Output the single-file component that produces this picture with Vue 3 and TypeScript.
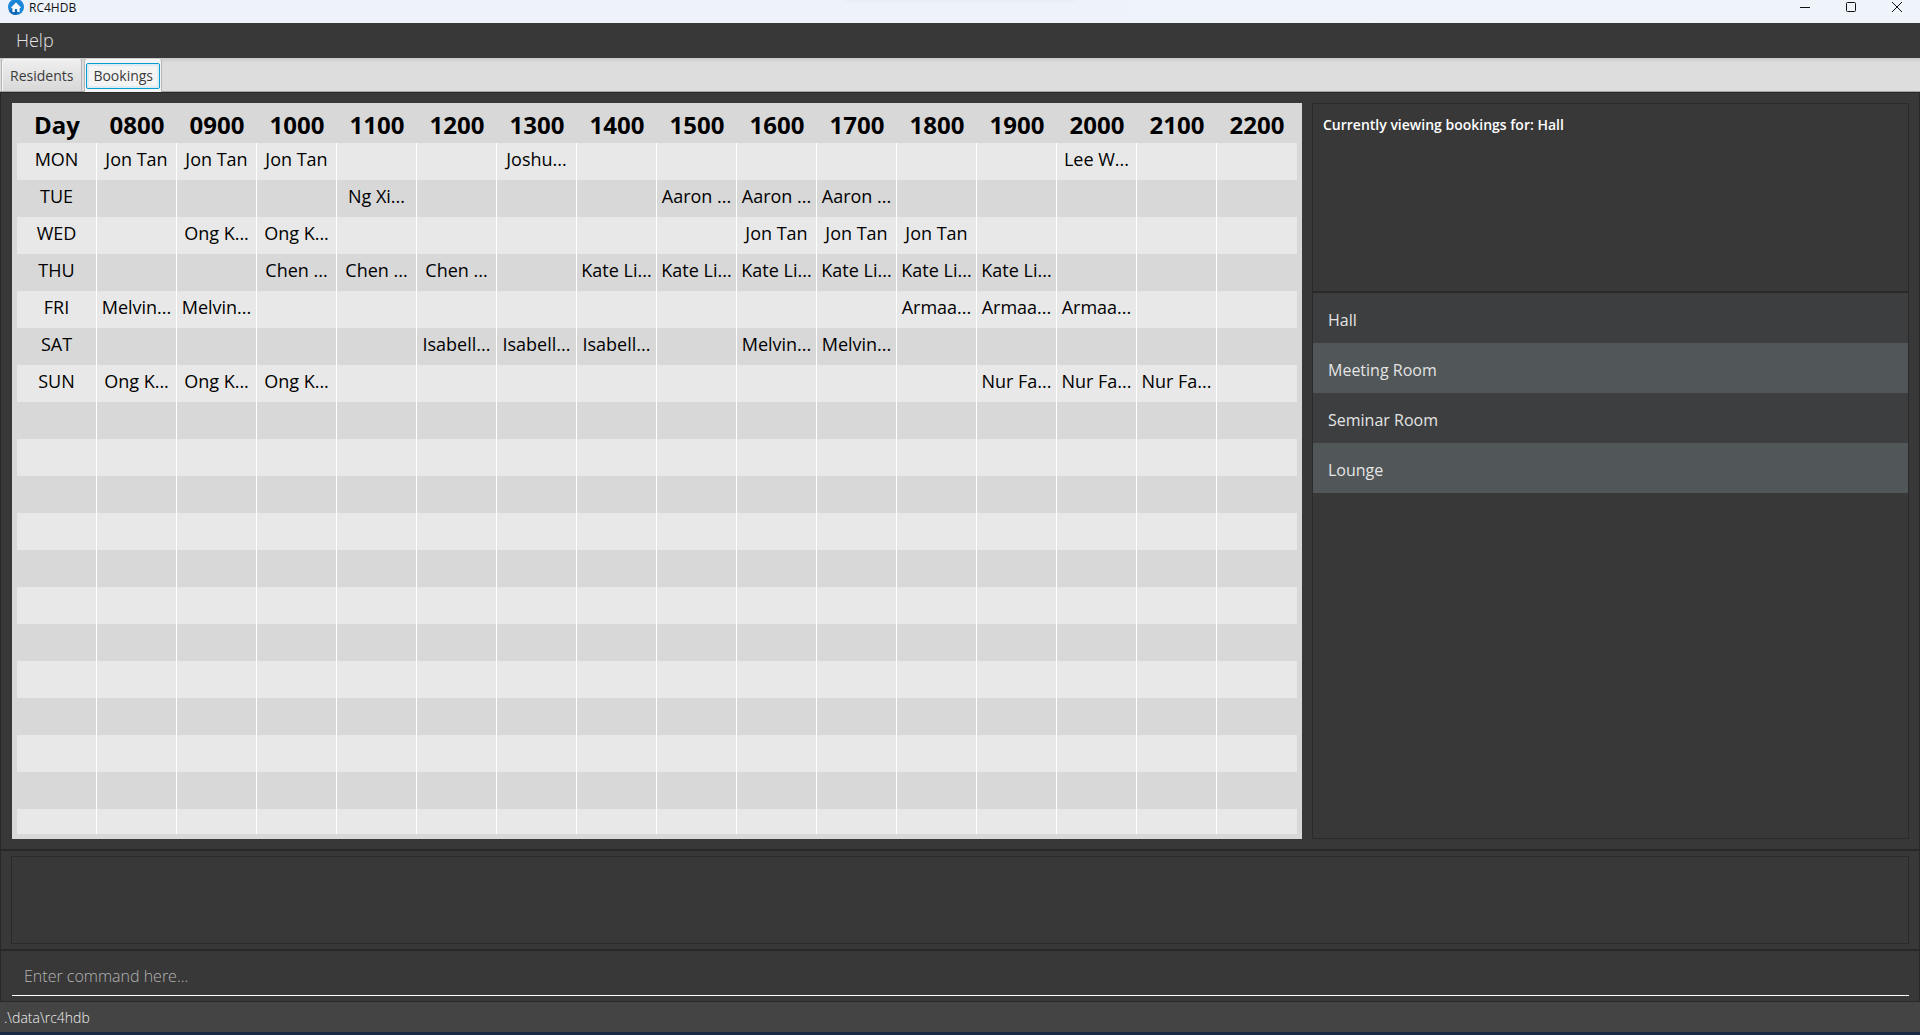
<script setup lang="ts">
import { ref } from 'vue'

interface DayRow {
  day: string
  bookings: Record<string, string>
}

const hours: string[] = Array.from({ length: 15 }, (_, i) => `${String(i + 8).padStart(2, '0')}00`)

const week: DayRow[] = [
  {
    day: 'MON',
    bookings: { '0800': 'Jon Tan', '0900': 'Jon Tan', '1000': 'Jon Tan', '1300': 'Joshu...', '2000': 'Lee W...' },
  },
  {
    day: 'TUE',
    bookings: { '1100': 'Ng Xi...', '1500': 'Aaron ...', '1600': 'Aaron ...', '1700': 'Aaron ...' },
  },
  {
    day: 'WED',
    bookings: { '0900': 'Ong K...', '1000': 'Ong K...', '1600': 'Jon Tan', '1700': 'Jon Tan', '1800': 'Jon Tan' },
  },
  {
    day: 'THU',
    bookings: {
      '1000': 'Chen ...', '1100': 'Chen ...', '1200': 'Chen ...',
      '1400': 'Kate Li...', '1500': 'Kate Li...', '1600': 'Kate Li...',
      '1700': 'Kate Li...', '1800': 'Kate Li...', '1900': 'Kate Li...',
    },
  },
  {
    day: 'FRI',
    bookings: { '0800': 'Melvin...', '0900': 'Melvin...', '1800': 'Armaa...', '1900': 'Armaa...', '2000': 'Armaa...' },
  },
  {
    day: 'SAT',
    bookings: { '1200': 'Isabell...', '1300': 'Isabell...', '1400': 'Isabell...', '1600': 'Melvin...', '1700': 'Melvin...' },
  },
  {
    day: 'SUN',
    bookings: {
      '0800': 'Ong K...', '0900': 'Ong K...', '1000': 'Ong K...',
      '1900': 'Nur Fa...', '2000': 'Nur Fa...', '2100': 'Nur Fa...',
    },
  },
]

// Empty striped rows that fill the table below the last day.
const fillerRows = 12

const venues = ['Hall', 'Meeting Room', 'Seminar Room', 'Lounge']
const tabs = ['Residents', 'Bookings']
const activeTab = ref('Bookings')
const currentVenue = ref('Hall')
const command = ref('')
const result = ref('')
</script>

<template>
  <div class="window">
    <header class="titlebar">
      <svg class="app-icon" viewBox="0 0 16 16" aria-hidden="true">
        <circle cx="8" cy="7" r="8" fill="#1b86d8" />
        <path d="M8 15 A8 8 0 0 1 1 11 L5 8 L11 12 Z" fill="#1268b4" />
        <path d="M8 2.6 L13 7.4 L12 8.2 L11.6 7.9 V12 H9.2 V9 H6.8 V12 H4.4 V7.9 L4 8.2 L3 7.4 Z" fill="#fff" />
      </svg>
      <span class="title">RC4HDB</span>
      <div class="controls">
        <button type="button" aria-label="Minimize">
          <svg viewBox="0 0 12 12"><path d="M1 6.5H11" /></svg>
        </button>
        <button type="button" aria-label="Maximize">
          <svg viewBox="0 0 12 12"><rect x="1.5" y="1.5" width="9" height="9" rx="1" /></svg>
        </button>
        <button type="button" aria-label="Close">
          <svg viewBox="0 0 12 12"><path d="M1 1L11 11M11 1L1 11" /></svg>
        </button>
      </div>
    </header>

    <nav class="menubar">
      <button type="button">Help</button>
    </nav>

    <div class="tabs" role="tablist">
      <button
        v-for="tab in tabs"
        :key="tab"
        type="button"
        role="tab"
        class="tab"
        :class="{ active: tab === activeTab }"
        :aria-selected="tab === activeTab"
        @click="activeTab = tab"
      >
        <span>{{ tab }}</span>
      </button>
    </div>

    <main class="content">
      <section class="schedule">
        <div class="viewport">
          <table>
            <thead>
              <tr>
                <th scope="col">Day</th>
                <th v-for="hour in hours" :key="hour" scope="col">{{ hour }}</th>
              </tr>
            </thead>
            <tbody>
              <tr v-for="row in week" :key="row.day">
                <td>{{ row.day }}</td>
                <td v-for="hour in hours" :key="hour">{{ row.bookings[hour] }}</td>
              </tr>
              <tr v-for="n in fillerRows" :key="n">
                <td v-for="c in hours.length + 1" :key="c"></td>
              </tr>
            </tbody>
          </table>
        </div>
      </section>

      <aside class="side">
        <p class="viewing">Currently viewing bookings for: {{ currentVenue }}</p>
        <ul class="venues">
          <li v-for="venue in venues" :key="venue">{{ venue }}</li>
        </ul>
      </aside>
    </main>

    <section class="result">
      <textarea v-model="result" readonly aria-label="Command result"></textarea>
    </section>

    <section class="command">
      <input v-model="command" type="text" placeholder="Enter command here..." aria-label="Command" />
    </section>

    <footer class="status">.\data\rc4hdb</footer>
  </div>
</template>

<style>
body {
  background: #383838;
}
</style>

<style scoped>
.window {
  display: flex;
  flex-direction: column;
  height: 100vh;
  box-sizing: border-box;
  border-bottom: 3px solid #1b2a44;
  overflow: hidden;
  background: #383838;
  font-family: "Open Sans", "Noto Sans", sans-serif;
}

button {
  margin: 0;
  padding: 0;
  border: 0;
  background: none;
  font-family: inherit;
}

.titlebar {
  display: flex;
  align-items: flex-start;
  height: 23px;
  padding-left: 8px;
  background: linear-gradient(90deg, #eef3fb 55%, #eef4f9 75%);
  position: relative;
}

.titlebar::before {
  content: "";
  position: absolute;
  top: -3px;
  left: 44%;
  width: 12%;
  height: 2px;
  box-shadow: 0 0 4px #d4d9e6;
}

.app-icon {
  width: 16px;
  height: 16px;
  margin-right: 5px;
}

.title {
  font-size: 12px;
  line-height: 16px;
  color: #111;
}

.controls {
  display: flex;
  margin-left: auto;
}

.controls button {
  width: 46px;
  height: 14px;
  display: flex;
  align-items: center;
  justify-content: center;
}

.controls svg {
  width: 12px;
  height: 12px;
  fill: none;
  stroke: #111;
}

.menubar {
  height: 35px;
  padding-left: 16px;
}

.menubar button {
  font-size: 18px;
  font-weight: 300;
  line-height: 35px;
  color: #e4e4e4;
}

.tabs {
  display: flex;
  align-items: stretch;
  gap: 2px;
  height: 34px;
  box-sizing: border-box;
  padding: 1px 1px 0;
  border-bottom: 1px solid #a4a4a4;
  background: linear-gradient(#cacaca, #dddddd 5px);
}

.tab {
  box-sizing: border-box;
  padding: 3px 1px 2px;
  border: 1px solid #b5b5b5;
  border-width: 0 1px;
  border-radius: 3px 3px 0 0;
  background: linear-gradient(#efefef, #d8d8d8);
  box-shadow: inset 1px 1px #f6f6f6;
  font-size: 14px;
  line-height: 24px;
  color: #3b3b3b;
}

.tab span {
  display: block;
  padding: 0 6px;
  border: 1px solid transparent;
  border-radius: 2px;
}

.tab.active {
  background: #f4f4f4;
  margin-bottom: -1px;
}

.tab.active span {
  border-color: #039ed3;
  box-shadow: inset 0 0 0 2px #dcecf2;
}

.content {
  display: flex;
  gap: 10px;
  flex: 1;
  min-height: 0;
  padding: 10px 10px 10px 11px;
  border: 1px solid #282828;
}

.schedule {
  flex: 1280 1 0;
  min-width: 0;
  box-sizing: border-box;
  padding: 5px;
  background: #d8d8d8;
  display: flex;
}

.viewport {
  flex: 1;
  min-width: 0;
  overflow: hidden;
}

table {
  width: 100%;
  table-layout: fixed;
  border-spacing: 0;
  color: #000;
}

th {
  height: 35px;
  box-sizing: border-box;
  padding: 0 0 2px;
  font-size: 24px;
  line-height: 33px;
  font-weight: 700;
}

td {
  height: 37px;
  box-sizing: border-box;
  padding: 0 0 5px;
  border-right: 1px solid #fff;
  text-align: center;
  font-size: 18px;
  line-height: 32px;
  white-space: nowrap;
}

td:last-child {
  border-right: 0;
}

tbody tr:nth-child(odd) {
  background: #e8e8e8;
}

.side {
  flex: 595 1 0;
  min-width: 0;
  box-sizing: border-box;
  border: 1px solid #2a2a2a;
}

.viewing {
  height: 187px;
  margin: 0;
  box-sizing: border-box;
  padding: 10px;
  font-size: 14px;
  line-height: 22px;
  font-weight: 600;
  color: #fff;
}

.venues {
  margin: 0;
  padding: 0;
  border-top: 2px solid #2a2a2a;
  list-style: none;
}

.venues li {
  height: 50px;
  box-sizing: border-box;
  padding: 2px 15px 0;
  font-size: 16px;
  line-height: 50px;
  font-weight: 500;
  color: #e4e4e4;
  background: #3c3e3f;
}

.venues li:nth-child(even) {
  background: #515658;
}

.result {
  display: flex;
  padding: 5px 10px;
  border: 1px solid #282828;
}

.result textarea {
  flex: 1;
  height: 88px;
  box-sizing: border-box;
  margin: 0;
  padding: 10px;
  border: 1px solid #2a2a2a;
  outline: 0;
  resize: none;
  background: #383838;
  color: #fff;
  font-family: inherit;
  font-size: 14px;
}

.command {
  display: flex;
  padding: 5px 10px 5px 11px;
  border: 1px solid #282828;
}

.command input {
  flex: 1;
  min-width: 0;
  height: 40px;
  box-sizing: border-box;
  margin: 0;
  padding: 0 12px;
  border: 0;
  border-bottom: 1px solid #fff;
  outline: 0;
  background: transparent;
  color: #fff;
  font-family: inherit;
  font-size: 16px;
  font-weight: 300;
}

.command input::placeholder {
  color: #b4b4b4;
  opacity: 1;
}

.status {
  height: 30px;
  box-sizing: border-box;
  padding: 1px 4px 0;
  background: #444;
  font-size: 14px;
  line-height: 30px;
  font-weight: 300;
  color: #f0f0f0;
}
</style>
